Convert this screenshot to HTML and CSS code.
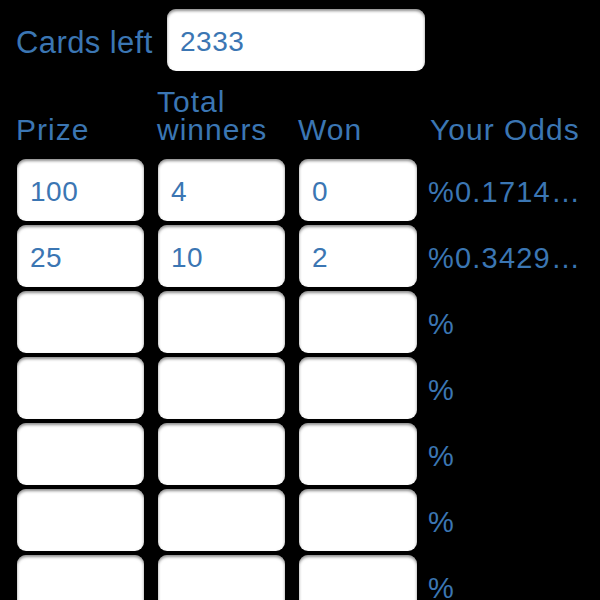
FILE: index.html
```html
<!DOCTYPE html>
<html lang="en">
<head>
  <meta charset="UTF-8">
  <title>Scratch Odds</title>
  <link rel="stylesheet" href="styles.css">
</head>
<body>

  <div class="cards-row">
    <label class="cards-label" for="cardsLeft">Cards left</label>
    <input class="field cards-field" id="cardsLeft" type="text" value="2333">
  </div>

  <div class="grid">
    <div class="head">Prize</div>
    <div class="head">Total<br>winners</div>
    <div class="head">Won</div>
    <div class="head">Your Odds</div>

    <input class="field" type="text" value="100">
    <input class="field" type="text" value="4">
    <input class="field" type="text" value="0">
    <div class="odds">%0.17145306</div>

    <input class="field" type="text" value="25">
    <input class="field" type="text" value="10">
    <input class="field" type="text" value="2">
    <div class="odds">%0.34290613</div>

    <input class="field" type="text">
    <input class="field" type="text">
    <input class="field" type="text">
    <div class="odds">%</div>

    <input class="field" type="text">
    <input class="field" type="text">
    <input class="field" type="text">
    <div class="odds">%</div>

    <input class="field" type="text">
    <input class="field" type="text">
    <input class="field" type="text">
    <div class="odds">%</div>

    <input class="field" type="text">
    <input class="field" type="text">
    <input class="field" type="text">
    <div class="odds">%</div>

    <input class="field" type="text">
    <input class="field" type="text">
    <input class="field" type="text">
    <div class="odds">%</div>
  </div>

</body>
</html>
```

FILE: styles.css
```css
html {
  background: #000;
}
body {
  margin: 0;
  padding: 9px 10px 0 16px;
  font-family: "Liberation Sans", Arial, sans-serif;
  color: #3b76b3;
  overflow: hidden;
}
.cards-row {
  display: flex;
  align-items: center;
}
.cards-label {
  width: 151px;
  font-size: 31px;
  letter-spacing: 0.4px;
  margin-top: 6px;
}
.field {
  box-sizing: border-box;
  height: 62px;
  border: none;
  border-radius: 9px;
  background: #fff;
  box-shadow: inset 0 2px 3px rgba(0, 0, 0, 0.45);
  padding: 4px 0 0 13px;
  font-family: inherit;
  font-size: 28px;
  letter-spacing: 0.5px;
  color: #3b76b3;
  outline: none;
}
.cards-field {
  width: 258px;
}
.grid {
  display: grid;
  grid-template-columns: 127px 127px 118px 155px;
  grid-auto-rows: 62px;
  column-gap: 14px;
  row-gap: 4px;
  margin-top: 22px;
  padding-left: 1px;
}
.head {
  grid-row: 1;
  align-self: end;
  font-size: 30px;
  line-height: 28px;
  letter-spacing: 1px;
  margin-left: -1px;
  margin-bottom: 11px;
}
.odds {
  align-self: center;
  font-size: 29px;
  letter-spacing: 1.2px;
  margin-left: -3px;
  padding-top: 4px;
  white-space: nowrap;
  overflow: hidden;
  text-overflow: ellipsis;
}
```
